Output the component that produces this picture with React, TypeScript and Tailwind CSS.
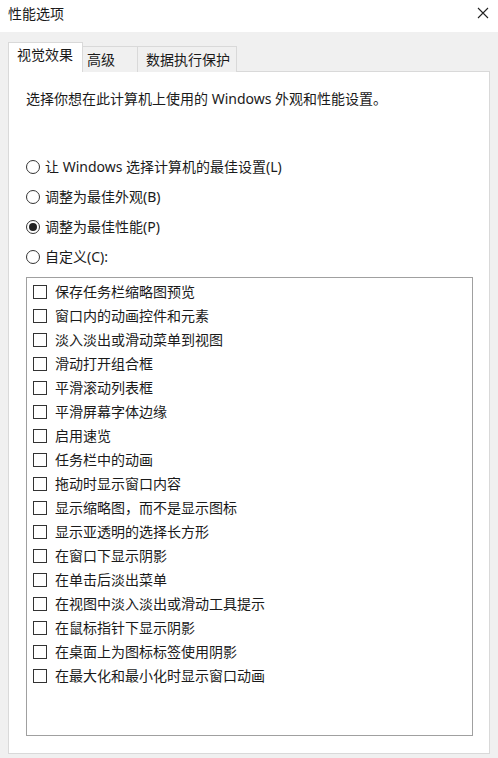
import { useState } from 'react'

const EFFECTS = [
  '保存任务栏缩略图预览',
  '窗口内的动画控件和元素',
  '淡入淡出或滑动菜单到视图',
  '滑动打开组合框',
  '平滑滚动列表框',
  '平滑屏幕字体边缘',
  '启用速览',
  '任务栏中的动画',
  '拖动时显示窗口内容',
  '显示缩略图，而不是显示图标',
  '显示亚透明的选择长方形',
  '在窗口下显示阴影',
  '在单击后淡出菜单',
  '在视图中淡入淡出或滑动工具提示',
  '在鼠标指针下显示阴影',
  '在桌面上为图标标签使用阴影',
  '在最大化和最小化时显示窗口动画',
]

const OPTIONS = [
  '让 Windows 选择计算机的最佳设置(L)',
  '调整为最佳外观(B)',
  '调整为最佳性能(P)',
  '自定义(C):',
]

function Radio({ checked }: { checked: boolean }) {
  return (
    <span className="w-[14px] h-[14px] rounded-full border border-[#333] bg-white flex items-center justify-center flex-shrink-0">
      {checked && <span className="w-[8px] h-[8px] rounded-full bg-[#222]" />}
    </span>
  )
}

export default function App() {
  const [mode, setMode] = useState(2)
  const [checks, setChecks] = useState<boolean[]>(EFFECTS.map(() => false))

  return (
    <div className="w-[498px] h-[758px] flex flex-col bg-white text-[#1a1a1a] font-['Noto_Sans','Noto_Sans_CJK_SC',sans-serif] text-[14px]">
      {/* 标题栏 */}
      <div className="h-[32px] flex items-center justify-between pl-[8px] pr-[9px] bg-white">
        <span className="leading-[20px] -mt-[4px]">性能选项</span>
        <svg width="12" height="12" viewBox="0 0 12 12" className="-mt-[6px]">
          <path d="M1 1L11 11M11 1L1 11" stroke="#222" strokeWidth="1.1" />
        </svg>
      </div>

      {/* 正文 */}
      <div className="flex-1 bg-[#f0f0f0] pl-[8px] pr-[8px] pt-[11px] pb-[4px] flex flex-col">
        {/* 选项卡 */}
        <div className="flex items-end h-[29px] relative z-10 -mb-px">
          <div className="w-[75px] h-[30px] bg-white border border-b-0 border-[#d9d9d9] flex items-start pl-[8px] pt-[2px] leading-[20px]">
            视觉效果
          </div>
          <div className="w-[55px] h-[26px] bg-[#f0f0f0] border border-l-0 border-b-0 border-[#d9d9d9] flex items-start pl-[4px] pt-[3px] leading-[20px]">
            高级
          </div>
          <div className="w-[99px] h-[26px] bg-[#f0f0f0] border border-l-0 border-b-0 border-[#d9d9d9] flex items-start pl-[8px] pt-[3px] leading-[20px]">
            数据执行保护
          </div>
        </div>

        <div className="flex-1 bg-white border border-[#d9d9d9] pl-[17px] pr-[16px] pt-[17px] flex flex-col">
          <p className="leading-[20px]">选择你想在此计算机上使用的 Windows 外观和性能设置。</p>

          <div className="mt-[43px] flex flex-col">
            {OPTIONS.map((o, i) => (
              <button
                key={o}
                onClick={() => setMode(i)}
                className="h-[30px] flex items-center gap-[5px] text-left"
              >
                <Radio checked={mode === i} />
                <span className="leading-[20px]">{o}</span>
              </button>
            ))}
          </div>

          {/* 效果列表 */}
          <div className="mt-[5px] h-[459px] border border-[#a0a0a0] bg-white pl-[6px] pt-[2px] flex flex-col">
            {EFFECTS.map((e, i) => (
              <label key={e} className="h-[24px] flex items-center gap-[8px] cursor-default">
                <span
                  onClick={() => setChecks(c => c.map((v, j) => (j === i ? !v : v)))}
                  className="w-[14px] h-[14px] border border-[#333] bg-white flex items-center justify-center flex-shrink-0"
                >
                  {checks[i] && (
                    <svg width="10" height="10" viewBox="0 0 10 10">
                      <path d="M1.5 5L4 7.5L8.5 2" stroke="#222" strokeWidth="1.3" fill="none" />
                    </svg>
                  )}
                </span>
                <span className="leading-[20px]">{e}</span>
              </label>
            ))}
          </div>
        </div>
      </div>
    </div>
  )
}
